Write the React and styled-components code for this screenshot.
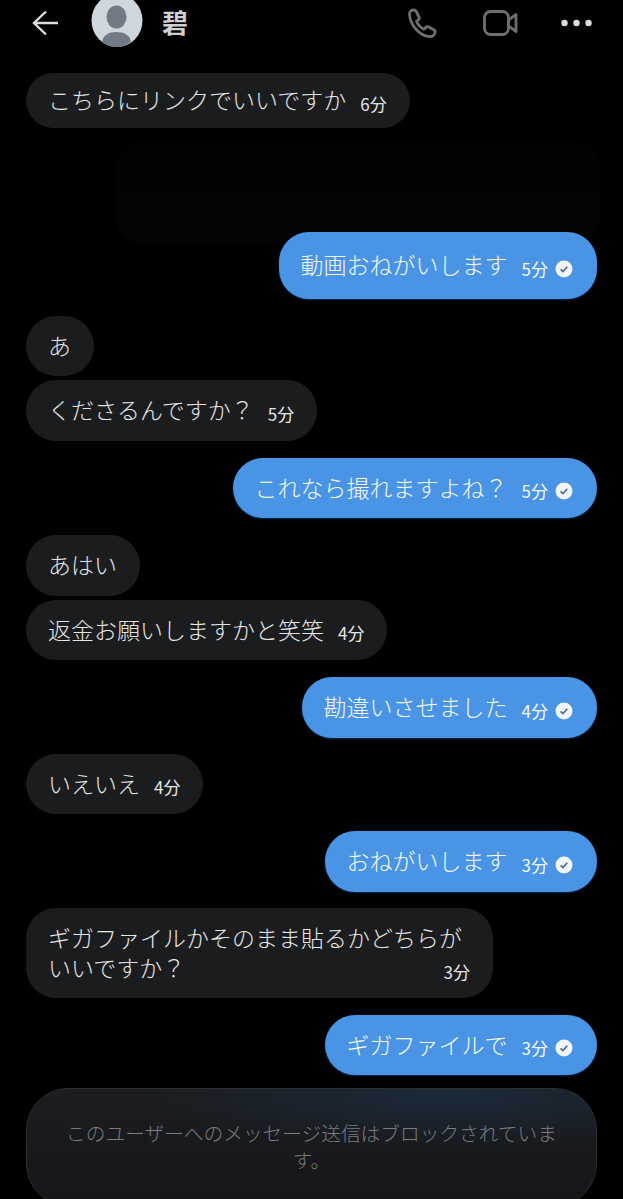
import styled, { createGlobalStyle } from 'styled-components';

const GlobalStyle = createGlobalStyle`
   html, body {
      margin: 0;
      padding: 0;
      background: #000;
   }
`;

const Page = styled.div`
   width: 623px;
   height: 1199px;
   overflow: hidden;
   background: #000;
   font-family: 'Noto Sans CJK JP', 'Noto Sans', sans-serif;
   font-weight: 300;
`;

const Header = styled.header`
   height: 73px;
   box-sizing: border-box;
   padding: 0 31px 27px 32px;
   display: flex;
   align-items: center;
   color: #dcdddd;
`;

const Avatar = styled.svg`
   width: 52px;
   height: 53px;
   margin: -5px 19px 0 33px;
   flex: none;
`;

const Name = styled.span`
   font-size: 26px;
   font-weight: 700;
   color: #cfd1d3;
   margin-top: -3px;
   flex: 1;
`;

const IconSlot = styled.div`
   display: flex;
   align-items: center;
   margin-left: ${(props) => props.$gap || 0}px;
   color: ${(props) => props.$color || '#6c6e70'};
`;

const MessageList = styled.main`
   display: flex;
   flex-direction: column;
   padding: 0 26px;
`;

const Bubble = styled.div`
   box-sizing: border-box;
   height: ${(props) => props.$height || 60}px;
   display: flex;
   align-items: center;
   gap: 14px;
   align-self: ${(props) => (props.$mine ? 'flex-end' : 'flex-start')};
   margin-top: ${(props) => props.$top}px;
   padding: 0 ${(props) => (props.$mine ? '24px' : '23px')} 3px 22px;
   border-radius: 30px;
   background: ${(props) => (props.$mine ? '#4a94e6' : '#1b1c1e')};
   box-shadow: ${(props) => (props.$mine ? '0 1px 2px #0b2c55' : 'none')};
   color: ${(props) => (props.$mine ? '#f4f8fd' : '#e4e5e6')};
   font-size: 23px;
   line-height: 30px;
   white-space: nowrap;
`;

const WrappedBubble = styled(Bubble)`
   display: block;
   width: 467px;
   padding-top: 14px;
`;

const LastLine = styled.div`
   display: flex;
   justify-content: space-between;
   align-items: center;
`;

const Time = styled.span`
   font-size: 17px;
   font-weight: 400;
   line-height: 20px;
   margin-top: 9px;
`;

const Sent = styled.svg`
   width: 18px;
   height: 18px;
   margin: 9px 0 0 -7px;
   flex: none;
`;

const RedactedBlock = styled.div`
   width: 485px;
   height: 105px;
   margin: 12px -3px -13px 0;
   align-self: flex-end;
   border-radius: 30px;
   background: linear-gradient(180deg, #020202 0%, #030405 100%);
`;

const BlockedNotice = styled.footer`
   box-sizing: border-box;
   height: 118px;
   margin: 13px 26px 0;
   padding: 30px 34px 0;
   border: 1px solid #2c2e31;
   border-radius: 42px;
   background:
      radial-gradient(ellipse 300px 55px at 74% 4%, #1b2a3a 0%, rgba(27, 42, 58, 0) 100%),
      linear-gradient(180deg, #1b1d20 0%, #141619 100%);
   color: #7a7c7e;
   font-size: 19.7px;
   line-height: 27px;
   text-align: center;
`;

const messages = [
   { id: 1, text: 'こちらにリンクでいいですか', time: '6分', top: 0, height: 55 },
   { id: 'redacted' },
   { id: 2, text: '動画おねがいします', time: '5分', mine: true, top: 0, height: 67 },
   { id: 3, text: 'あ', top: 17 },
   { id: 4, text: 'くださるんですか？', time: '5分', top: 4, height: 61 },
   { id: 5, text: 'これなら撮れますよね？', time: '5分', mine: true, top: 17 },
   { id: 6, text: 'あはい', top: 17, height: 61 },
   { id: 7, text: '返金お願いしますかと笑笑', time: '4分', top: 4 },
   { id: 8, text: '勘違いさせました', time: '4分', mine: true, top: 17, height: 61 },
   { id: 9, text: 'いえいえ', time: '4分', top: 16 },
   { id: 10, text: 'おねがいします', time: '3分', mine: true, top: 17, height: 61 },
   {
      id: 11,
      text: 'ギガファイルかそのまま貼るかどちらが',
      lastLine: 'いいですか？',
      time: '3分',
      top: 16,
      height: 90,
   },
   { id: 12, text: 'ギガファイルで', time: '3分', mine: true, top: 17 },
];

function SentMark() {
   return (
      <Sent viewBox="0 0 18 18">
         <circle cx="9" cy="9" r="8.5" fill="#f2f5f9" />
         <path
            d="M5.6 9.3l2.3 2.3 4.4-4.8"
            fill="none"
            stroke="#4d6f97"
            strokeWidth="1.7"
         />
      </Sent>
   );
}

function Message({ message }) {
   if (message.lastLine) {
      return (
         <WrappedBubble $top={message.top} $height={message.height}>
            <div>{message.text}</div>
            <LastLine>
               <span>{message.lastLine}</span>
               <Time>{message.time}</Time>
            </LastLine>
         </WrappedBubble>
      );
   }
   return (
      <Bubble $mine={message.mine} $top={message.top} $height={message.height}>
         <span>{message.text}</span>
         {message.time && <Time>{message.time}</Time>}
         {message.mine && <SentMark />}
      </Bubble>
   );
}

function App() {
   return (
      <Page>
         <GlobalStyle />
         <Header>
            <svg width="26" height="26" viewBox="0 0 26 26" fill="none" stroke="currentColor" strokeWidth="2.4">
               <path d="M26 13H2M14 1.500L2 13l12 11.500" />
            </svg>
            <Avatar viewBox="0 0 52 53">
               <ellipse cx="26" cy="26.5" rx="25.5" ry="26.5" fill="#cfd6dc" />
               <ellipse cx="25.5" cy="23" rx="10" ry="11.5" fill="#717a85" />
               <path d="M11 48c1-7 7-10 14.500-10s13.500 3 14.500 10c-4 3-9 5-14.500 5s-10.500-2-14.500-5z" fill="#717a85" />
            </Avatar>
            <Name>碧</Name>
            <IconSlot>
               <svg width="31" height="31" viewBox="0 0 31 31" fill="none" stroke="currentColor" strokeWidth="2.8" strokeLinejoin="round">
                  <path d="M2.500 6C2.500 3.500 4.500 2 6.500 2c1.500 0 2.500.7 3 2l2.500 5c.5 1.200.2 2.200-.8 3l-1.700 1.500c1.500 3.500 4 6 7.500 7.800l1.700-1.800c.8-.9 1.800-1.100 3-.5l5 2.700c1.300.7 1.800 1.800 1.300 3.200-.8 2.500-3 4-5.500 3.800C12 27.500 3 17 2.500 6z" />
               </svg>
            </IconSlot>
            <IconSlot $gap={45}>
               <svg width="35" height="26" viewBox="0 0 35 26" fill="none" stroke="currentColor" strokeWidth="2.8" strokeLinejoin="round">
                  <rect x="1.500" y="1.500" width="24" height="23" rx="6" />
                  <path d="M25.500 10l7.500-5.500v17l-7.500-5.500z" />
               </svg>
            </IconSlot>
            <IconSlot $gap={43} $color="#dcdddf">
               <svg width="31" height="8" viewBox="0 0 31 8" fill="currentColor">
                  <circle cx="3.500" cy="4" r="3.200" />
                  <circle cx="15.500" cy="4" r="3.200" />
                  <circle cx="27.500" cy="4" r="3.200" />
               </svg>
            </IconSlot>
         </Header>
         <MessageList>
            {messages.map((message) =>
               message.id === 'redacted' ? (
                  <RedactedBlock key={message.id} />
               ) : (
                  <Message key={message.id} message={message} />
               )
            )}
         </MessageList>
         <BlockedNotice>
            このユーザーへのメッセージ送信はブロックされています。
         </BlockedNotice>
      </Page>
   );
}

export default App;
